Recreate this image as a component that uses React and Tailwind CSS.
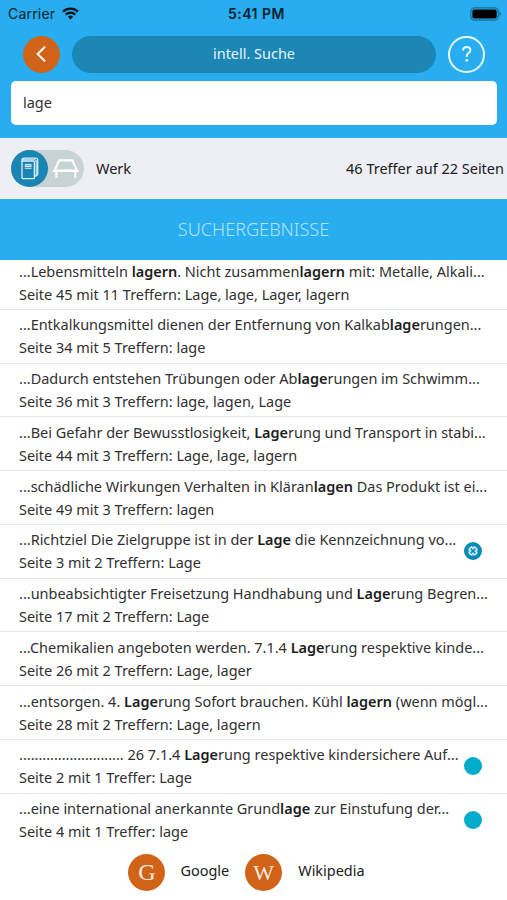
import React from "react";

const results = [
  {
    text: ["...Lebensmitteln ", "lagern", ". Nicht zusammen", "lagern", " mit: Metalle, Alkali..."],
    info: "Seite 45 mit 11 Treffern: Lage, lage, Lager, lagern",
  },
  {
    text: ["...Entkalkungsmittel dienen der Entfernung von Kalkab", "lage", "rungen..."],
    info: "Seite 34 mit 5 Treffern: lage",
  },
  {
    text: ["...Dadurch entstehen Trübungen oder Ab", "lage", "rungen im Schwimm..."],
    info: "Seite 36 mit 3 Treffern: lage, lagen, Lage",
  },
  {
    text: ["...Bei Gefahr der Bewusstlosigkeit, ", "Lage", "rung und Transport in stabi..."],
    info: "Seite 44 mit 3 Treffern: Lage, lage, lagern",
  },
  {
    text: ["...schädliche Wirkungen Verhalten in Kläran", "lagen", " Das Produkt ist ei..."],
    info: "Seite 49 mit 3 Treffern: lagen",
  },
  {
    text: ["...Richtziel Die Zielgruppe ist in der ", "Lage", " die Kennzeichnung vo..."],
    info: "Seite 3 mit 2 Treffern: Lage",
    mark: "target",
  },
  {
    text: ["...unbeabsichtigter Freisetzung Handhabung und ", "Lage", "rung Begren..."],
    info: "Seite 17 mit 2 Treffern: Lage",
  },
  {
    text: ["...Chemikalien angeboten werden. 7.1.4 ", "Lage", "rung respektive kinde..."],
    info: "Seite 26 mit 2 Treffern: Lage, lager",
  },
  {
    text: ["...entsorgen. 4. ", "Lage", "rung Sofort brauchen. Kühl ", "lagern", " (wenn mögl..."],
    info: "Seite 28 mit 2 Treffern: Lage, lagern",
  },
  {
    text: ["........................... 26 7.1.4 ", "Lage", "rung respektive kindersichere Auf..."],
    info: "Seite 2 mit 1 Treffer: Lage",
    mark: "dot",
  },
  {
    text: ["...eine international anerkannte Grund", "lage", " zur Einstufung der..."],
    info: "Seite 4 mit 1 Treffer: lage",
    mark: "dot",
  },
];

const StatusBar = () => (
  <div className="grid h-[27px] grid-cols-3 items-center pl-2 pr-[5px] font-['Inter'] text-[14px] text-[#06202d]">
    <div className="flex items-center gap-[7px]">
      <span className="tracking-[0.2px]">Carrier</span>
      <svg width="17" height="13" viewBox="0 0 17 13" fill="none" stroke="#03121a" strokeWidth="2.3">
        <path d="M1 4.6a10.8 10.8 0 0 1 15 0" />
        <path d="M3.8 7.6a6.7 6.7 0 0 1 9.4 0" />
        <path d="M8.5 12.4 5.9 9.8a3.7 3.7 0 0 1 5.2 0z" fill="#03121a" stroke="none" />
      </svg>
    </div>
    <span className="pl-[3px] text-center font-semibold tracking-[0.5px]">5:41 PM</span>
    <svg className="justify-self-end" width="32" height="14" viewBox="0 0 32 14">
      <rect x="0.8" y="0.8" width="27.5" height="12.4" rx="3.6" fill="none" stroke="#166d94" strokeWidth="1.2" />
      <rect x="2.4" y="2.4" width="24.3" height="9.2" rx="2" fill="#000" />
      <path d="M29.6 4.8c1.9.7 1.9 3.7 0 4.4z" fill="#166d94" />
    </svg>
  </div>
);

const Header = () => (
  <div className="flex h-[50px] items-center gap-3 pl-[23px] pr-[22px] pt-1">
    <button className="flex size-[37px] shrink-0 items-center justify-center rounded-full bg-[#d16318] pr-[2px]">
      <svg width="12" height="18" viewBox="0 0 12 18" fill="none" stroke="#fff" strokeWidth="2">
        <path d="M10 1.8 2.6 9l7.4 7.2" />
      </svg>
    </button>
    <div className="flex h-[37px] flex-1 items-center justify-center rounded-full bg-[#1c86b4] text-[14.46px] text-[#e4f5fd]">
      intell. Suche
    </div>
    <button className="flex size-[37px] shrink-0 items-center justify-center rounded-full border-2 border-[#e8f8ff]">
      <svg width="12" height="18" viewBox="0 0 12 18" fill="none" stroke="#e8f8ff" strokeWidth="2">
        <path d="M2 5.4C2 3.2 3.7 2 5.7 2s3.7 1.3 3.7 3.3c0 2.6-3.6 3-3.6 5.6v.8" />
        <circle cx="5.8" cy="15.3" r="1.4" fill="#e8f8ff" stroke="none" />
      </svg>
    </button>
  </div>
);

const Toggle = () => (
  <div className="flex h-[37px] w-[73px] items-center rounded-full bg-[#c8d3d5]">
    <div className="flex size-[37px] items-center justify-center rounded-full bg-[#1a84b3]">
      <svg width="18" height="23" viewBox="0 0 18 23" fill="none" stroke="#d5f0fa" strokeWidth="1.3">
        <rect x="1" y="4" width="12.4" height="17.6" rx="1.2" />
        <path d="M1 5V3.4C1 2 2 1.2 3.4 1.2h11.4c1.2 0 1.9.7 1.9 1.9v14c0 1.4-.9 1.9-3.3 2.6" />
        <path d="M1.6 2.8h12c1 0 1.6.6 1.6 1.6v14.2M3.8 7.6h6.8M3.8 9.4h6.8M3.8 11.2h6.8" strokeWidth="1.1" />
      </svg>
    </div>
    <svg className="ml-1" width="28" height="22" viewBox="0 0 28 22" fill="none" stroke="#fff" strokeWidth="2.1">
      <path d="M7.2 2.4h13.2l4.6 10.2H2.6zM.8 13h26M4.4 13v6.8M23.2 13v6.8" />
    </svg>
  </div>
);

const Mark = ({ type }) => {
  if (type === "dot") {
    return <div className="size-[18px] shrink-0 rounded-full bg-[#00abcb]"></div>;
  }
  return (
    <svg className="shrink-0" width="18" height="18" viewBox="0 0 18 18" fill="none">
      <circle cx="9" cy="9" r="9" fill="#078bb5" />
      <circle cx="9" cy="9" r="4.9" fill="#cdebf5" />
      <path d="M6.6 6.6l4.8 4.8M11.4 6.6l-4.8 4.8" stroke="#078bb5" strokeWidth="1.5" />
      <path d="M9 4v1.4M9 12.6V14M4 9h1.4M12.6 9H14" stroke="#078bb5" strokeWidth="1" />
    </svg>
  );
};

const ResultRow = ({ result }) => (
  <li className="flex h-[53.76px] items-center border-b border-[#e6e6e6] pl-[19px] pr-[25px]">
    <div className="min-w-0 flex-1 whitespace-nowrap pt-[0.5px] text-[14.47px] leading-[23px] text-[#303030]">
      <p>
        {result.text.map((part, i) =>
          i % 2 ? (
            <b key={i} className="font-semibold text-[#1c1c1c]">{part}</b>
          ) : (
            <span key={i}>{part}</span>
          )
        )}
      </p>
      <p>{result.info}</p>
    </div>
    {result.mark && <Mark type={result.mark} />}
  </li>
);

const App = () => {
  return (
    <div className="h-[900px] w-[507px] overflow-hidden bg-white font-['Noto_Sans',sans-serif] text-[#202020]">
      {/* Top area with the search field */}
      <div className="h-[138px] bg-[#27adf0]">
        <StatusBar />
        <Header />
        <div className="ml-[11px] mr-[10px] mt-1 flex h-11 items-center rounded-[5px] bg-white px-3 text-[14.46px] text-[#303030]">
          lage
        </div>
      </div>

      {/* Source switch and hit count */}
      <div className="flex h-[61px] items-center bg-[#edeff5] pl-[11px] pr-[3px] text-[14.5px]">
        <Toggle />
        <span className="ml-3">Werk</span>
        <span className="ml-auto">46 Treffer auf 22 Seiten</span>
      </div>

      <h2 className="flex h-[61px] items-center justify-center bg-[#27adf0] text-[18.1px] font-light text-[#b5e5fc]">
        SUCHERGEBNISSE
      </h2>

      {/* Result list, slightly scrolled */}
      <div className="h-[584px] overflow-hidden">
        <ul className="-mt-[4px]">
          {results.map((result) => (
            <ResultRow key={result.info} result={result} />
          ))}
        </ul>
      </div>

      <div className="flex h-14 items-center justify-center pr-[14px] text-[14.46px]">
        <span className="flex size-[37px] items-center justify-center rounded-full bg-[#d16318] font-['Liberation_Serif',serif] text-[24px] text-[#fdeee3]">G</span>
        <span className="ml-[15px] pb-[2px]">Google</span>
        <span className="ml-4 flex size-[37px] items-center justify-center rounded-full bg-[#d16318] font-['Liberation_Serif',serif] text-[22px] text-[#fdeee3]">W</span>
        <span className="ml-4 pb-[2px]">Wikipedia</span>
      </div>
    </div>
  );
};

export default App;
